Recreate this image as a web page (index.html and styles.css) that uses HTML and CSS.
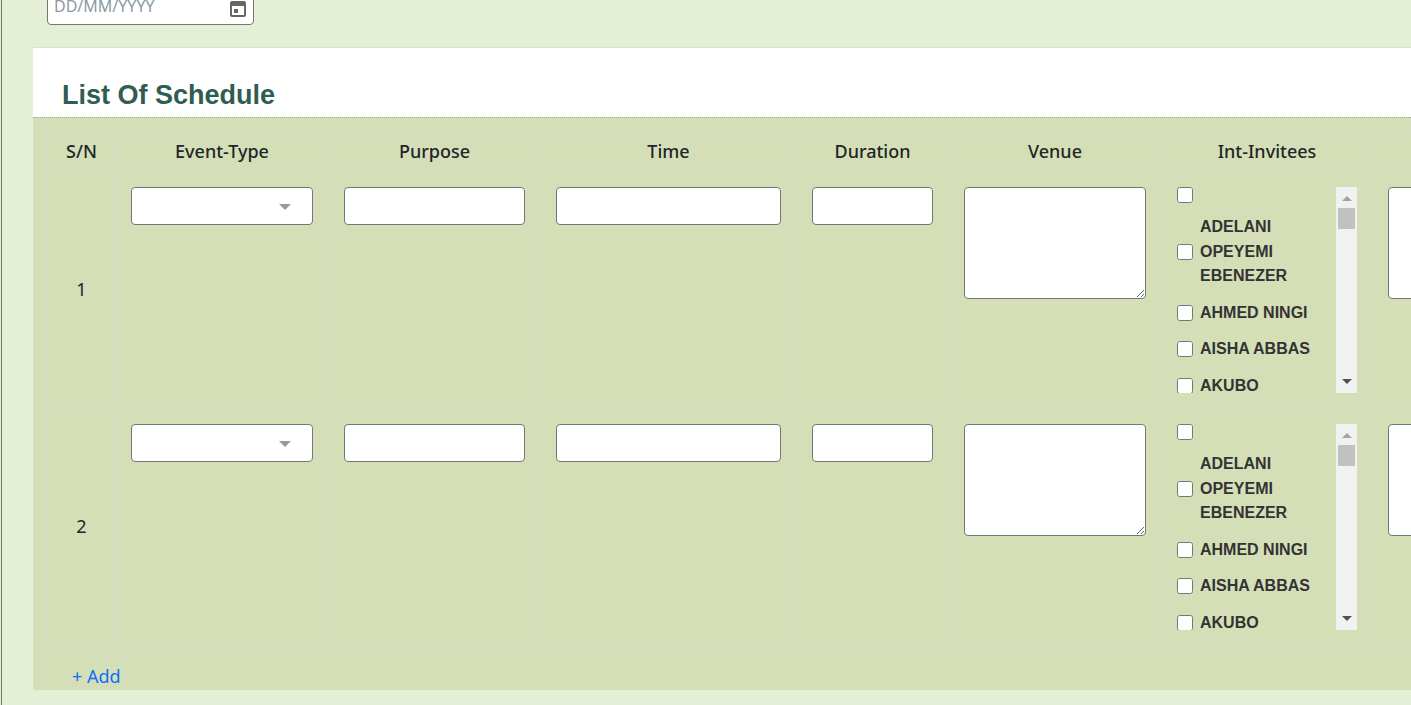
FILE: index.html
```html
<!DOCTYPE html>
<html>
<head>
    <title>Schedule</title>
    <link rel="stylesheet" href="styles.css">
</head>
<body>
    <div class="page">
        <div class="date-field">
            <input class="date-input" type="text" placeholder="DD/MM/YYYY">
            <svg class="date-icon" width="16" height="18" viewBox="0 0 16 18">
                <path fill="#666" d="M2 2h12a2 2 0 0 1 2 2v12a2 2 0 0 1-2 2H2a2 2 0 0 1-2-2V4a2 2 0 0 1 2-2zm0 5v9h12V7H2zm2 3h4v4H4v-4z"/>
            </svg>
        </div>

        <section class="card">
            <h2 class="card-title">List Of Schedule</h2>
            <div class="card-body">
                <table class="schedule">
                    <colgroup>
                        <col class="col-sn">
                        <col class="col-type">
                        <col class="col-purpose">
                        <col class="col-time">
                        <col class="col-duration">
                        <col class="col-venue">
                        <col class="col-invitees">
                        <col class="col-extra">
                    </colgroup>
                    <thead>
                        <tr>
                            <th>S/N</th>
                            <th>Event-Type</th>
                            <th>Purpose</th>
                            <th>Time</th>
                            <th>Duration</th>
                            <th>Venue</th>
                            <th>Int-Invitees</th>
                            <th></th>
                        </tr>
                    </thead>
                    <tbody>
                        <tr>
                            <td class="sn">1</td>
                            <td><div class="select-box"><select class="field"></select></div></td>
                            <td><input class="field" type="text"></td>
                            <td><input class="field" type="text"></td>
                            <td><input class="field" type="text"></td>
                            <td><textarea class="notes"></textarea></td>
                            <td>
                                <div class="invitees">
                                    <div class="invitee-list">
                                        <label class="invitee"><input type="checkbox"><span></span></label>
                                        <label class="invitee"><input type="checkbox"><span>ADELANI OPEYEMI EBENEZER</span></label>
                                        <label class="invitee"><input type="checkbox"><span>AHMED NINGI</span></label>
                                        <label class="invitee"><input type="checkbox"><span>AISHA ABBAS</span></label>
                                        <label class="invitee"><input type="checkbox"><span>AKUBO</span></label>
                                    </div>
                                    <div class="scrollbar">
                                        <span class="arrow-up"></span>
                                        <span class="thumb"></span>
                                        <span class="arrow-down"></span>
                                    </div>
                                </div>
                            </td>
                            <td><textarea class="notes"></textarea></td>
                        </tr>
                        <tr>
                            <td class="sn">2</td>
                            <td><div class="select-box"><select class="field"></select></div></td>
                            <td><input class="field" type="text"></td>
                            <td><input class="field" type="text"></td>
                            <td><input class="field" type="text"></td>
                            <td><textarea class="notes"></textarea></td>
                            <td>
                                <div class="invitees">
                                    <div class="invitee-list">
                                        <label class="invitee"><input type="checkbox"><span></span></label>
                                        <label class="invitee"><input type="checkbox"><span>ADELANI OPEYEMI EBENEZER</span></label>
                                        <label class="invitee"><input type="checkbox"><span>AHMED NINGI</span></label>
                                        <label class="invitee"><input type="checkbox"><span>AISHA ABBAS</span></label>
                                        <label class="invitee"><input type="checkbox"><span>AKUBO</span></label>
                                    </div>
                                    <div class="scrollbar">
                                        <span class="arrow-up"></span>
                                        <span class="thumb"></span>
                                        <span class="arrow-down"></span>
                                    </div>
                                </div>
                            </td>
                            <td><textarea class="notes"></textarea></td>
                        </tr>
                    </tbody>
                </table>
                <a class="add-link" href="#">+ Add</a>
            </div>
        </section>
    </div>
</body>
</html>
```

FILE: styles.css
```css
html, body {
    height: 705px;
    overflow: hidden;
}

body {
    margin: 0;
    background-color: #e4efd5;
    font-family: "Noto Sans", sans-serif;
    color: #212529;
}

.page {
    width: 1700px;
    margin-top: -14px;
    margin-left: 1px;
    padding-left: 31px;
    border-left: 1px solid #6b7f62;
    box-sizing: border-box;
    height: 800px;
}

.date-field {
    position: relative;
    width: 207px;
    margin-left: 14px;
}

.date-input {
    display: block;
    width: 100%;
    height: 39px;
    box-sizing: border-box;
    padding: 0 6px;
    border: 1px solid #767676;
    border-radius: 4px;
    background: #fff;
    font-family: "Noto Sans", sans-serif;
    font-size: 16px;
}

.date-input::placeholder {
    color: #8b9aa3;
}

.date-icon {
    position: absolute;
    top: 13px;
    right: 8px;
}

.card {
    margin-top: 22px;
}

.card-title {
    margin: 0;
    height: 70px;
    box-sizing: border-box;
    padding: 32px 0 0 29px;
    background: #fff;
    border-top: 1px solid #d8e4c0;
    font-family: "Liberation Sans", sans-serif;
    font-size: 27px;
    line-height: 31px;
    font-weight: 700;
    color: #2f5d50;
}

.card-body {
    height: 573px;
    box-sizing: border-box;
    padding: 12px 0 0 14px;
    background: #d5dfb7;
    border-top: 1px dotted #9aa58a;
}

.schedule {
    table-layout: fixed;
    width: 1500px;
    border-collapse: collapse;
}

.col-sn { width: 68px; }
.col-type { width: 213px; }
.col-purpose { width: 212px; }
.col-time { width: 256px; }
.col-duration { width: 152px; }
.col-venue { width: 213px; }
.col-invitees { width: 211px; }
.col-extra { width: 175px; }

.schedule th,
.schedule td {
    border: 1px solid #dadcd2;
}

.schedule th {
    height: 39px;
    padding: 0;
    font-size: 18px;
    font-weight: 500;
    text-align: center;
}

.schedule td {
    height: 236px;
    padding: 16px 15px 14px;
    vertical-align: top;
    box-sizing: border-box;
}

.schedule td.sn {
    padding: 0;
    vertical-align: middle;
    text-align: center;
    font-size: 18px;
}

.field {
    display: block;
    width: 100%;
    height: 38px;
    box-sizing: border-box;
    padding: 0 12px;
    border: 1px solid #767676;
    border-radius: 4px;
    background: #fff;
    appearance: none;
}

.select-box {
    position: relative;
}

.select-box::after {
    content: "";
    position: absolute;
    top: 17px;
    right: 22px;
    border-top: 6px solid #999;
    border-left: 6px solid transparent;
    border-right: 6px solid transparent;
}

.notes {
    display: block;
    width: 100%;
    height: 112px;
    box-sizing: border-box;
    border: 1px solid #767676;
    border-radius: 4px;
    background: #fff;
}

.invitees {
    display: flex;
    height: 206px;
}

.invitee-list {
    flex: 1;
    overflow: hidden;
    font-family: "Liberation Sans", sans-serif;
    font-size: 16px;
    font-weight: 700;
    line-height: 24.5px;
    color: #333;
}

.invitee {
    display: flex;
    align-items: center;
    gap: 7px;
    margin-bottom: 12px;
}

.invitee input {
    flex: none;
    width: 16px;
    height: 16px;
    margin: 0;
}

.scrollbar {
    flex: none;
    display: flex;
    flex-direction: column;
    align-items: center;
    width: 21px;
    background: #f1f1f1;
    position: relative;
}

.arrow-up {
    margin-top: 9px;
    border-bottom: 5px solid #a3a3a3;
    border-left: 5px solid transparent;
    border-right: 5px solid transparent;
}

.thumb {
    width: 17px;
    height: 21px;
    margin-top: 7px;
    background: #c1c1c1;
}

.arrow-down {
    margin-top: auto;
    margin-bottom: 9px;
    border-top: 5px solid #505050;
    border-left: 5px solid transparent;
    border-right: 5px solid transparent;
}

.add-link {
    display: block;
    width: 60px;
    margin: 19px 0 0 25px;
    font-size: 18px;
    line-height: 25px;
    color: #0d6efd;
    text-decoration: none;
}
```
